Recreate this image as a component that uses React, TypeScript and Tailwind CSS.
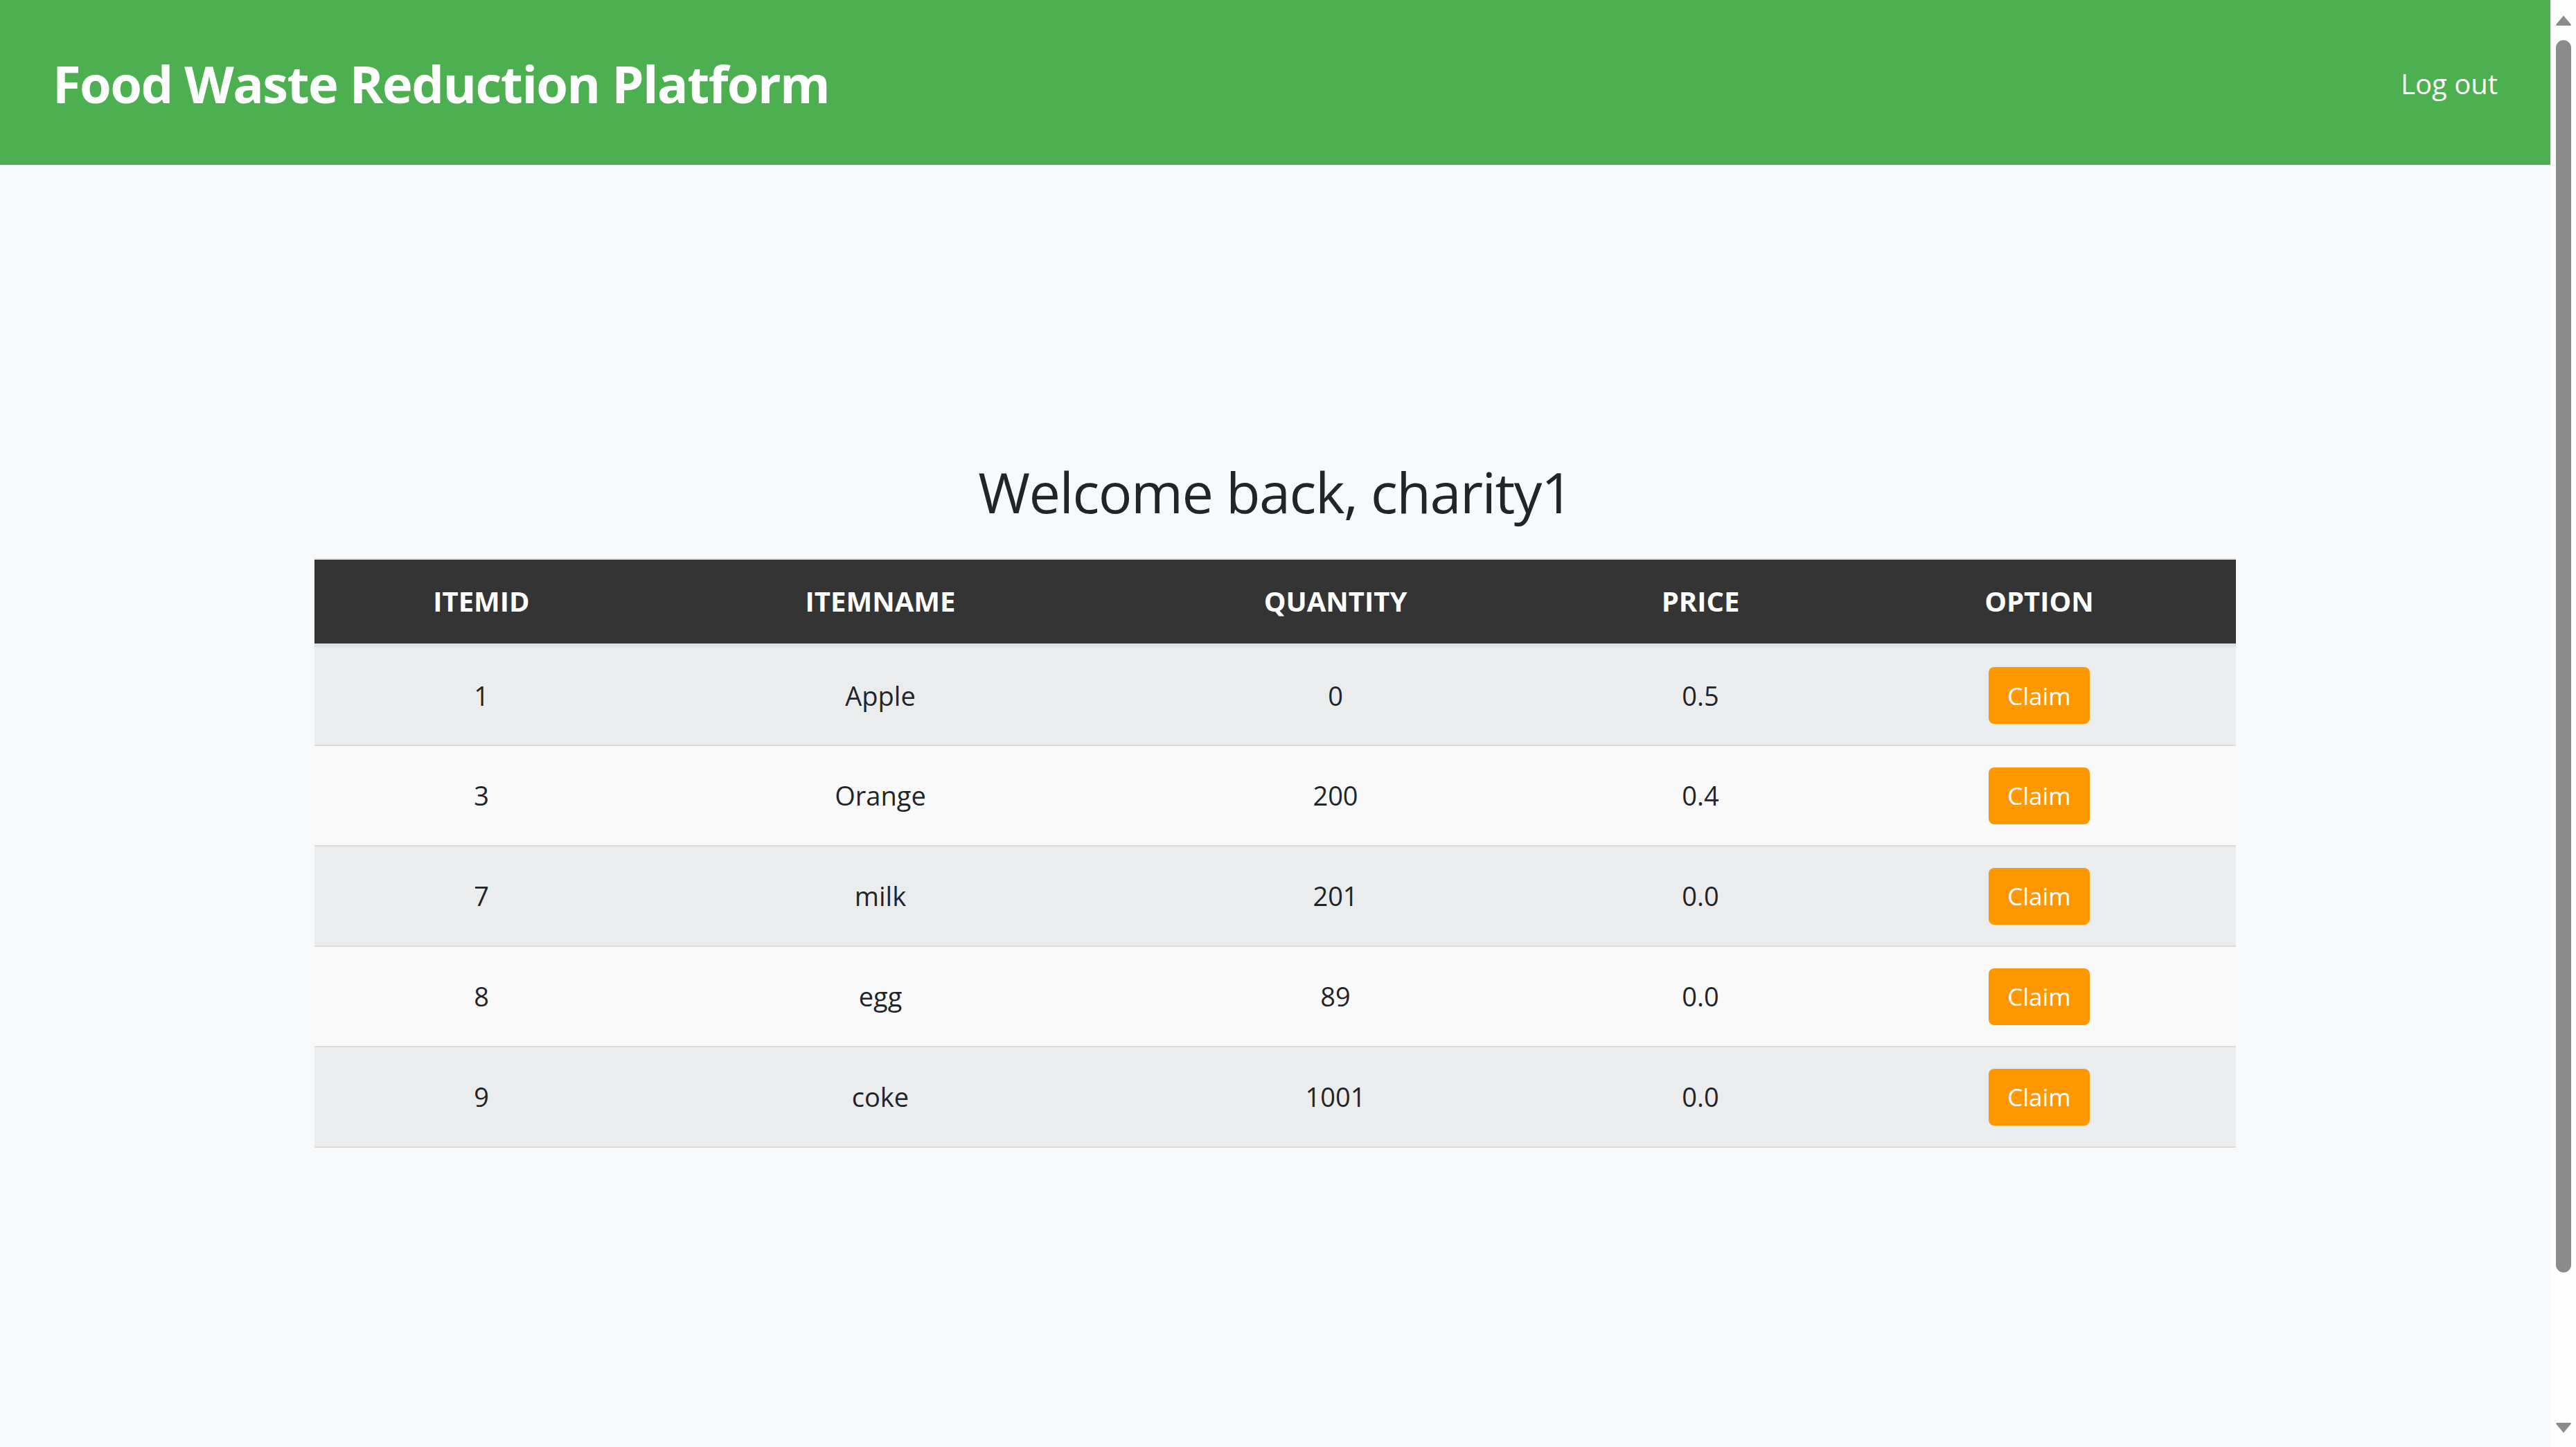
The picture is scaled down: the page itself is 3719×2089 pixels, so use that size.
import React from "react"

type Item = { id: number; name: string; quantity: number; price: string }

const items: Item[] = [
  { id: 1, name: "Apple", quantity: 0, price: "0.5" },
  { id: 3, name: "Orange", quantity: 200, price: "0.4" },
  { id: 7, name: "milk", quantity: 201, price: "0.0" },
  { id: 8, name: "egg", quantity: 89, price: "0.0" },
  { id: 9, name: "coke", quantity: 1001, price: "0.0" },
]

function Scrollbar() {
  return (
    <div className="w-[37px] shrink-0 bg-[#fdfdfd] flex flex-col items-center pt-[21px] pb-[19px]">
      <svg width="24" height="17" viewBox="0 0 24 17">
        <path d="M12 1.5 L22.5 14 Q23.5 16 21 16 L3 16 Q0.5 16 1.5 14 Z" fill="#8b8b8b" />
      </svg>
      <div className="mt-[20px] w-[22px] h-[1779px] rounded-full bg-[#8b8b8b]" />
      <div className="flex-1" />
      <svg width="24" height="18" viewBox="0 0 24 18">
        <path d="M12 16.5 L22.5 4 Q23.5 2 21 2 L3 2 Q0.5 2 1.5 4 Z" fill="#8b8b8b" />
      </svg>
    </div>
  )
}

export default function App() {
  return (
    <div className="flex h-screen overflow-hidden font-['Open_Sans',sans-serif] text-[#212529]">
      <div className="flex-1 flex flex-col bg-[#f8f9fa]">
        <header className="h-[238px] shrink-0 bg-[#4caf50] flex items-center justify-between pl-[76px] pr-[76px] pt-[4px]">
          <h1 className="text-[74px] font-bold text-white leading-[1.2] tracking-[-1.6px]">
            Food Waste Reduction Platform
          </h1>
          <a href="#" className="text-[40px] text-white leading-[1.2]">
            Log out
          </a>
        </header>

        <main className="flex flex-col items-center pt-[423px]">
          <h2 className="text-[81px] font-medium leading-[1.2] mb-[48px] tracking-[-1.5px]">
            Welcome back, charity1
          </h2>

          <table className="w-[2774px] table-fixed border-collapse text-center">
            <colgroup>
              <col className="w-[482px]" />
              <col className="w-[670px]" />
              <col className="w-[644px]" />
              <col className="w-[410px]" />
              <col className="w-[568px]" />
            </colgroup>
            <thead>
              <tr className="bg-[#343434] text-white border-t-[2px] border-b-[5px] border-[#dee2e6]">
                <th className="h-[124px] text-[40px] font-bold">ITEMID</th>
                <th className="h-[124px] text-[40px] font-bold">ITEMNAME</th>
                <th className="h-[124px] text-[40px] font-bold">QUANTITY</th>
                <th className="h-[124px] text-[40px] font-bold">PRICE</th>
                <th className="h-[124px] text-[40px] font-bold">OPTION</th>
              </tr>
            </thead>
            <tbody className="text-[38px]">
              {items.map((item, i) => (
                <tr
                  key={item.id}
                  className={`${i % 2 === 0 ? "bg-[#ebecee]" : "bg-[#f9f9f9]"} border-b-[2px] border-[#dcdcdc]`}
                >
                  <td className="h-[145px]">{item.id}</td>
                  <td className="h-[145px]">{item.name}</td>
                  <td className="h-[145px]">{item.quantity}</td>
                  <td className="h-[145px]">{item.price}</td>
                  <td className="h-[145px]">
                    <button className="w-[146px] h-[82px] rounded-[8px] bg-[#ff9800] text-white text-[35px] leading-none">
                      Claim
                    </button>
                  </td>
                </tr>
              ))}
            </tbody>
          </table>
        </main>
      </div>
      <Scrollbar />
    </div>
  )
}
